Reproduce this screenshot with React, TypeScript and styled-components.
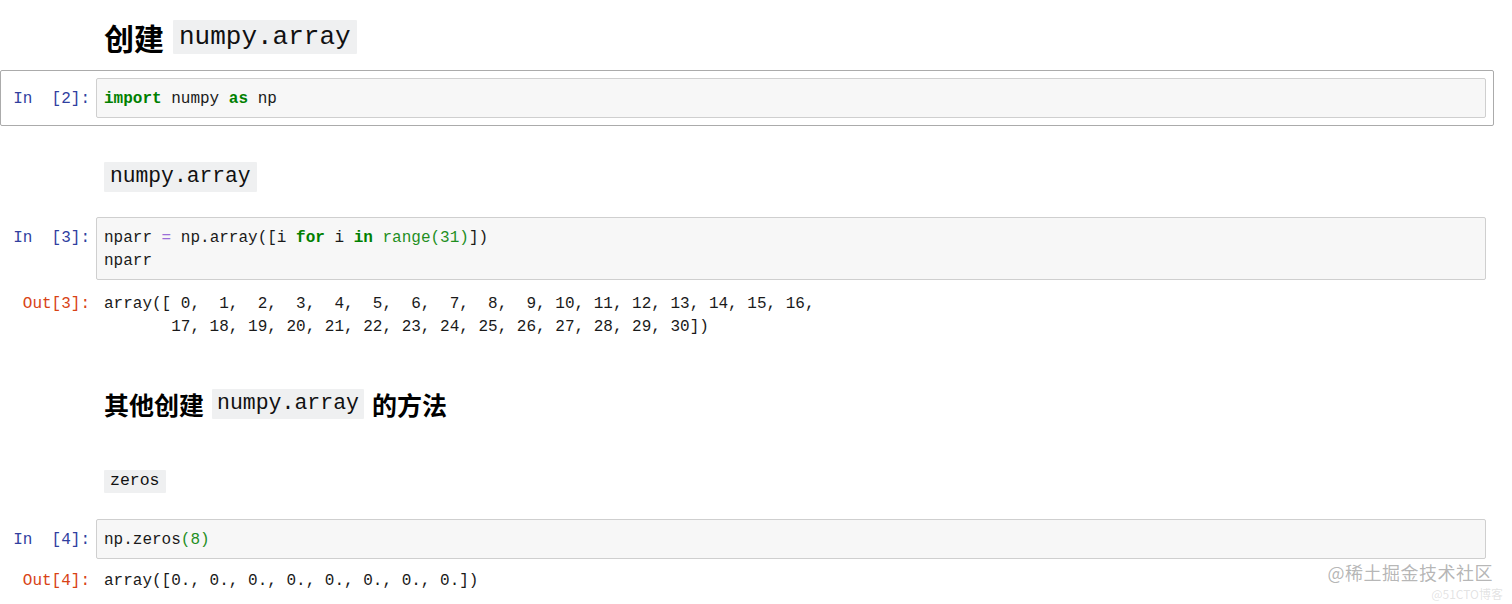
import React from "react";
import styled, { createGlobalStyle } from "styled-components";

const GlobalStyle = createGlobalStyle`
  html, body {
    margin: 0;
    padding: 0;
    background: #ffffff;
  }
  body {
    font-family: "Liberation Mono", "DejaVu Sans Mono", monospace;
    color: #000;
  }
`;

const MONO = `"Liberation Mono", "DejaVu Sans Mono", monospace`;
const CJK = `"Noto Sans CJK SC", "Noto Sans", sans-serif`;

const Page = styled.div`
  position: relative;
  width: 1512px;
  height: 604px;
  overflow: hidden;
`;

const Notebook = styled.div`
  display: flex;
  flex-direction: column;
  width: 1494px;
`;

const MdCell = styled.div<{ $top: number; $h: number }>`
  display: flex;
  align-items: center;
  margin-top: ${(p) => p.$top}px;
  height: ${(p) => p.$h}px;
  padding-left: 104px;
`;

const Heading = styled.div<{ $size: number; $gap: number }>`
  display: flex;
  align-items: center;
  gap: ${(p) => p.$gap}px;
  font-family: ${CJK};
  font-weight: 700;
  font-size: ${(p) => p.$size}px;
  color: #000;
  line-height: 1;
`;

const MdCode = styled.span<{ $size: number; $h: number; $pad: number }>`
  display: inline-flex;
  align-items: center;
  height: ${(p) => p.$h}px;
  padding: 0 ${(p) => p.$pad}px;
  background: #eff0f1;
  font-family: ${MONO};
  font-weight: 400;
  font-size: ${(p) => p.$size}px;
  color: #111;
  border-radius: 1px;
`;

const Cell = styled.div<{ $top: number; $selected?: boolean }>`
  display: flex;
  flex-direction: column;
  margin-top: ${(p) => p.$top}px;
  padding: 7px;
  border: 1px solid ${(p) => (p.$selected ? "#ababab" : "transparent")};
  border-radius: 2px;
`;

const Row = styled.div<{ $gapTop?: number }>`
  display: flex;
  align-items: flex-start;
  margin-top: ${(p) => p.$gapTop ?? 0}px;
`;

const Prompt = styled.div<{ $out?: boolean; $padTop: number }>`
  flex: 0 0 88px;
  box-sizing: border-box;
  padding: ${(p) => p.$padTop}px 6px 0 0;
  text-align: right;
  font-family: ${MONO};
  font-size: 16px;
  line-height: 23px;
  white-space: pre;
  color: ${(p) => (p.$out ? "#D84315" : "#303F9F")};
`;

const InputBox = styled.div`
  flex: 1;
  background: #f7f7f7;
  border: 1px solid #cfcfcf;
  border-radius: 2px;
  padding: 9px 7px 6px 7px;
`;

const CodeLine = styled.div`
  font-family: ${MONO};
  font-size: 16px;
  line-height: 23px;
  white-space: pre;
  color: #1a1a1a;
`;

const OutputText = styled.div`
  flex: 1;
  padding-left: 8px;
  font-family: ${MONO};
  font-size: 16px;
  line-height: 23px;
  white-space: pre;
  color: #1a1a1a;
`;

const Kw = styled.span`
  color: #008000;
  font-weight: 700;
`;

const Bi = styled.span`
  color: #1f8f1f;
`;

const Op = styled.span`
  color: #9b6fd8;
`;

const Watermark = styled.div`
  position: absolute;
  right: 19px;
  top: 563px;
  font-family: ${CJK};
  font-size: 18px;
  line-height: 18px;
  color: rgba(120, 120, 120, 0.55);
  letter-spacing: 0.5px;
`;

const Watermark2 = styled.div`
  position: absolute;
  right: 9px;
  top: 587px;
  font-family: ${CJK};
  font-size: 12px;
  line-height: 13px;
  color: rgba(160, 160, 160, 0.3);
`;

export default function App() {
  return (
    <Page>
      <GlobalStyle />
      <Notebook>
        <MdCell $top={20} $h={34}>
          <Heading $size={30} $gap={9}>
            <span>创建</span>
            <MdCode $size={26} $h={34} $pad={6}>
              numpy.array
            </MdCode>
          </Heading>
        </MdCell>

        <Cell $top={16} $selected>
          <Row>
            <Prompt $padTop={10}>{"In  [2]:"}</Prompt>
            <InputBox>
              <CodeLine>
                <Kw>import</Kw> numpy <Kw>as</Kw> np
              </CodeLine>
            </InputBox>
          </Row>
        </Cell>

        <MdCell $top={36} $h={30}>
          <Heading $size={24} $gap={8}>
            <MdCode $size={21.3} $h={30} $pad={6}>
              numpy.array
            </MdCode>
          </Heading>
        </MdCell>

        <Cell $top={17}>
          <Row>
            <Prompt $padTop={10}>{"In  [3]:"}</Prompt>
            <InputBox>
              <CodeLine>
                nparr <Op>=</Op> np.array([i <Kw>for</Kw> i <Kw>in</Kw>{" "}
                <Bi>range(31)</Bi>])
              </CodeLine>
              <CodeLine>nparr</CodeLine>
            </InputBox>
          </Row>
          <Row $gapTop={13}>
            <Prompt $out $padTop={0}>
              {"Out[3]:"}
            </Prompt>
            <OutputText>
              {
                "array([ 0,  1,  2,  3,  4,  5,  6,  7,  8,  9, 10, 11, 12, 13, 14, 15, 16,\n       17, 18, 19, 20, 21, 22, 23, 24, 25, 26, 27, 28, 29, 30])"
              }
            </OutputText>
          </Row>
        </Cell>

        <MdCell $top={42} $h={30}>
          <Heading $size={25} $gap={8}>
            <span>其他创建</span>
            <MdCode $size={21.5} $h={30} $pad={5}>
              numpy.array
            </MdCode>
            <span>的方法</span>
          </Heading>
        </MdCell>

        <MdCell $top={51} $h={23}>
          <Heading $size={16} $gap={0}>
            <MdCode $size={16.5} $h={23} $pad={6}>
              zeros
            </MdCode>
          </Heading>
        </MdCell>

        <Cell $top={18}>
          <Row>
            <Prompt $padTop={10}>{"In  [4]:"}</Prompt>
            <InputBox>
              <CodeLine>
                np.zeros<Bi>(8)</Bi>
              </CodeLine>
            </InputBox>
          </Row>
          <Row $gapTop={11}>
            <Prompt $out $padTop={0}>
              {"Out[4]:"}
            </Prompt>
            <OutputText>{"array([0., 0., 0., 0., 0., 0., 0., 0.])"}</OutputText>
          </Row>
        </Cell>
      </Notebook>
      <Watermark>@稀土掘金技术社区</Watermark>
      <Watermark2>@51CTO博客</Watermark2>
    </Page>
  );
}
